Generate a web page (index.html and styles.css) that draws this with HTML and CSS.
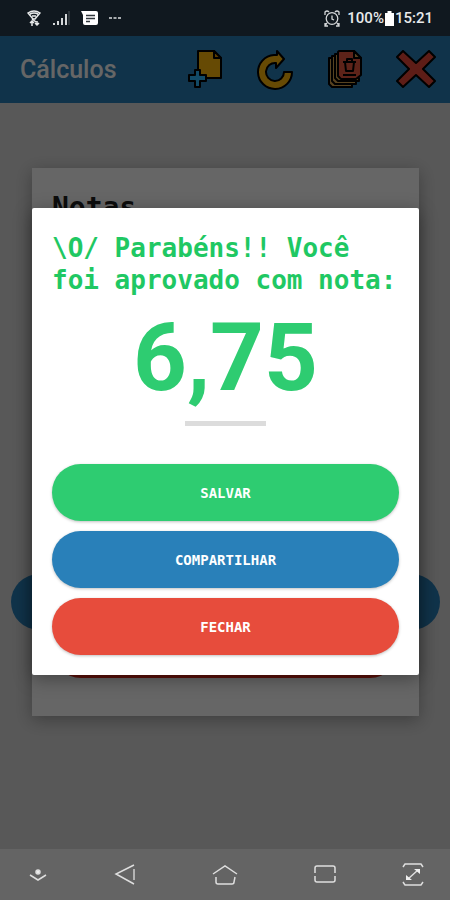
FILE: index.html
```html
<!DOCTYPE html>
<html lang="pt-BR">
<head>
    <meta charset="UTF-8">
    <meta name="viewport" content="width=device-width, initial-scale=1.0">
    <title>Cálculos</title>
    <link rel="stylesheet" href="styles.css">
</head>
<body>
    <!-- Phone status bar -->
    <div class="status-bar">
        <div class="status-group status-left">
            <svg width="16" height="18" viewBox="0 0 16 18" fill="none" stroke="#e8eaeb" stroke-width="1.5">
                <path d="M2 4 Q8 0 14 4 L9 10 H7 Z M4 5 Q8 3 12 5 M6 7 H10"/>
                <path d="M6 10 L10 13 M6 12 V17 M4 14 L6 12 L8 14 M11 12 V16 M9 14 L11 16 L13 14"/>
            </svg>
            <svg width="17" height="16" viewBox="0 0 17 16" stroke="#d4d7d9" stroke-width="2">
                <path d="M1 13 V15 M5 11 V15 M9 8 V15 M13 4 V15"/>
                <path d="M16 1 V15" stroke="#4b5359" stroke-width="1"/>
            </svg>
            <svg width="17" height="15" viewBox="0 0 17 15">
                <path d="M0 0 H15 Q17 0 17 2 V12 Q17 14 15 14 H4 Q2 14 2 12 V4 Z" fill="#fff"/>
                <path d="M5 4.5 H14 M5 7.5 H14 M5 10.5 H9" stroke="#30373d" stroke-width="1.3"/>
            </svg>
            <svg width="12" height="4" viewBox="0 0 12 4" fill="#a9adb0">
                <path d="M0 1 H3 V3 H0 Z M4.500 1 H7.500 V3 H4.500 Z M9 1 H12 V3 H9 Z"/>
            </svg>
        </div>
        <div class="status-group">
            <svg class="alarm" width="16" height="17" viewBox="0 0 16 17" fill="none" stroke="#d4d7d9" stroke-width="1.3">
                <circle cx="8" cy="8.500" r="5.800"/>
                <path d="M1 5 V2 Q3 0 5 2 M15 5 V2 Q13 0 11 2 M3 13 L1 15.500 M13 13 L15 15.500 M1 13 V16 H4 M15 13 V16 H12 M8 5.500 V9 L10 10"/>
            </svg>
            <span>100%</span>
            <svg width="9" height="15" viewBox="0 0 9 15"><path d="M0 2 H2.500 V0 H6.500 V2 H9 V15 H0 Z" fill="#fff"/></svg>
            <span>15:21</span>
        </div>
    </div>

    <div class="app">
        <header class="toolbar">
            <h1 class="toolbar-title">Cálculos</h1>
            <button class="tool" type="button" aria-label="Novo">
                <svg width="38" height="40" viewBox="0 0 38 40" stroke="#000" stroke-width="2" stroke-linejoin="round">
                    <path d="M12 1 H28 L35 8 V28 H12 Z" fill="#ffb90a"/>
                    <path d="M28 1 V8 H35 Z" fill="#e89a00"/>
                    <path d="M9 20 H14 V25 H20 V31 H14 V37 H9 V31 H3 V25 H9 Z" fill="#2fb8ff"/>
                </svg>
            </button>
            <button class="tool" type="button" aria-label="Refazer">
                <svg width="38" height="40" viewBox="0 0 38 40" fill="#ffb90a" stroke="#000" stroke-width="2" stroke-linejoin="round">
                    <path d="M21 1 L28 9 L20 18 V13 A9 9 0 1 0 28 22 H36 A17 17 0 1 1 18 5 L21 5 Z"/>
                </svg>
            </button>
            <button class="tool" type="button" aria-label="Excluir notas">
                <svg width="38" height="40" viewBox="0 0 38 40" stroke="#000" stroke-width="2" stroke-linejoin="round">
                    <path d="M3 8 H18 V30 H26 V37 H6 L3 34 Z" fill="#d9a850"/>
                    <path d="M6 6 H20 V28 H30 V34 H9 L6 31 Z" fill="#d9a850"/>
                    <path d="M9 4 H22 V28 H33 V31 H12 L9 28 Z" fill="#d9a850"/>
                    <path d="M13 1 H28 L35 8 V25 L30 29 H15 L12 26 V2 Z" fill="#e9573f"/>
                    <path d="M28 1 V8 H35 Z" fill="#d9a850"/>
                    <path d="M17 12 H30 M21 12 V9 H26 V12 M19 12 L20 21 H27 L28 12 M17 25 H30" fill="none"/>
                </svg>
            </button>
            <button class="tool" type="button" aria-label="Fechar tela">
                <svg width="40" height="40" viewBox="0 0 40 40" fill="#e84a3a" stroke="#000" stroke-width="2" stroke-linejoin="round">
                    <path d="M1 7 L7 1 L20 13 L33 1 L39 7 L27 19 L39 31 L33 37 L20 25 L7 37 L1 31 L13 19 Z"/>
                </svg>
            </button>
        </header>

        <main class="content">
            <div class="wide-pill"></div>
            <section class="card">
                <h2 class="card-title">Notas</h2>
                <div class="card-pill"></div>
            </section>
        </main>

        <!-- Result popup -->
        <div class="overlay">
            <section class="dialog" role="dialog" aria-labelledby="result-title">
                <h2 class="dialog-title" id="result-title">\O/ Parabéns!! Você foi aprovado com nota:</h2>
                <p class="grade">6,75</p>
                <hr class="divider">
                <div class="actions">
                    <button class="btn btn-save" type="button">SALVAR</button>
                    <button class="btn btn-share" type="button">COMPARTILHAR</button>
                    <button class="btn btn-close" type="button">FECHAR</button>
                </div>
            </section>
        </div>
    </div>

    <!-- Android navigation -->
    <nav class="nav-bar">
        <button class="nav-btn" type="button" aria-label="Ocultar">
            <svg width="26" height="24" viewBox="0 0 26 24"><circle cx="13" cy="9" r="2" fill="#eee"/><path d="M5 12 L13 17 L21 12"/></svg>
        </button>
        <button class="nav-btn" type="button" aria-label="Voltar">
            <svg width="26" height="24" viewBox="0 0 26 24"><path d="M22 2 L4 11 L22 21"/><path d="M22 6 V17" stroke="#b4b4b4" stroke-width="2"/></svg>
        </button>
        <button class="nav-btn" type="button" aria-label="Início">
            <svg width="26" height="24" viewBox="0 0 26 24"><path d="M1 11 L13 3 L25 11 M4 14 V19 Q4 21 6 21 H20 Q22 21 22 19 L23 14"/></svg>
        </button>
        <button class="nav-btn" type="button" aria-label="Recentes">
            <svg width="26" height="24" viewBox="0 0 26 24"><path d="M3 10 V5 Q3 3 5 3 H21 Q23 3 23 5 V10 M3 13 V17 Q3 19 5 19 H21 Q23 19 23 17 V13"/></svg>
        </button>
        <button class="nav-btn" type="button" aria-label="Tela cheia">
            <svg width="26" height="24" viewBox="0 0 26 24">
                <path d="M3 4 L5 1 H21 L23 4 M3 19 L5 22 H21 L23 19 M8 16 L18 7"/>
                <path d="M14 6 H20 V11 Z M6 12 V17 H12 Z" fill="#eee" stroke="none"/>
            </svg>
        </button>
    </nav>
</body>
</html>
```
FILE: styles.css
```css
* {
    box-sizing: border-box;
}
body {
    margin: 0;
    min-height: 100vh;
    display: flex;
    flex-direction: column;
    font-family: Roboto, "Liberation Sans", sans-serif;
    background-color: #585858;
}
h1, h2, p {
    margin: 0;
}
button {
    border: 0;
    padding: 0;
    background: none;
    font: inherit;
    cursor: pointer;
}
svg {
    display: block;
}

/* Status bar */
.status-bar {
    height: 36px;
    padding: 0 17px 0 26px;
    display: flex;
    justify-content: space-between;
    align-items: center;
    background-color: #10181f;
    color: #e8eaeb;
    font-size: 15px;
    font-weight: 500;
}
.status-group {
    display: flex;
    align-items: center;
    gap: 1px;
}
.status-left {
    gap: 11px;
}
.alarm {
    margin-right: 6px;
}

/* App screen */
.app {
    flex: 1;
    display: flex;
    flex-direction: column;
    position: relative;
}
.toolbar {
    height: 67px;
    padding: 0 14px 0 20px;
    display: flex;
    align-items: center;
    gap: 32px;
    background-color: #2980b9;
}
.toolbar-title {
    flex: 1;
    color: #fff;
    font-size: 25px;
    font-weight: 500;
}
.content {
    flex: 1;
    display: grid;
    padding: 65px 31px 133px 32px;
    background-color: #dcdcdc;
}
.card,
.wide-pill {
    grid-area: 1 / 1;
}
.card {
    display: flex;
    flex-direction: column;
    padding: 22px 20px 38px;
    background-color: #fff;
    box-shadow: 0 4px 16px rgba(0, 0, 0, 0.3);
}
.card-title {
    color: #222;
    font-family: "DejaVu Sans Mono", monospace;
    font-size: 28px;
    line-height: 36px;
}
.card-pill {
    height: 58px;
    margin-top: auto;
    border-radius: 29px;
    background-color: #e02a1a;
}
.wide-pill {
    align-self: end;
    height: 56px;
    margin: 0 -21px 86px;
    border-radius: 28px;
    background-color: #2980b9;
}

/* Result popup */
.overlay {
    position: absolute;
    inset: 0;
    display: flex;
    align-items: center;
    padding: 0 31px 2px 32px;
    background-color: rgba(0, 0, 0, 0.6);
}
.dialog {
    flex: 1;
    padding: 24px 20px 20px;
    border-radius: 2px;
    background-color: #fff;
    box-shadow: 0 4px 18px rgba(0, 0, 0, 0.35);
    text-align: center;
}
.dialog-title {
    color: #1fc863;
    font-family: "DejaVu Sans Mono", monospace;
    font-size: 26px;
    line-height: 32px;
    text-align: left;
}
.grade {
    margin-top: 14px;
    color: #2ecc71;
    font-size: 94px;
    font-weight: 700;
    line-height: 96px;
}
.divider {
    width: 81px;
    height: 5px;
    margin: 15px auto 38px;
    border: 0;
    background-color: #dcdcdc;
}
.actions {
    display: flex;
    flex-direction: column;
    gap: 10px;
}
.btn {
    height: 57px;
    border-radius: 29px;
    color: #fff;
    font-family: "DejaVu Sans Mono", monospace;
    font-size: 14px;
    font-weight: 700;
    box-shadow: 0 1px 3px rgba(0, 0, 0, 0.25);
}
.btn-save {
    background-color: #2ecc71;
}
.btn-share {
    background-color: #2980b9;
}
.btn-close {
    background-color: #e74c3c;
}

/* Navigation bar */
.nav-bar {
    height: 51px;
    display: grid;
    grid-template-columns: 3fr 4fr 4fr 4fr 3fr;
    align-items: center;
    background-color: #646464;
}
.nav-btn {
    display: flex;
    justify-content: center;
}
.nav-btn svg {
    fill: none;
    stroke: #dedede;
    stroke-width: 1.5;
}
```
